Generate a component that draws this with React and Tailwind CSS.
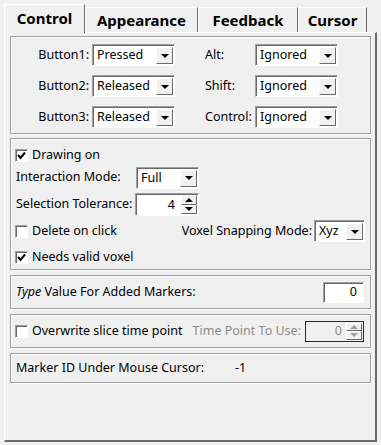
import React from "react";

function Arrow() {
  return <div className="w-0 h-0 border-l-[4px] border-r-[4px] border-t-[4px] border-l-transparent border-r-transparent border-t-black" />;
}

function Choice({ w, value }) {
  return (
    <div className={`flex items-stretch h-[22px] ${w} bg-white border border-t-[#a0a0a0] border-l-[#a0a0a0] border-r-white border-b-white shadow-[inset_1px_1px_0_#696969]`}>
      <span className="flex-1 flex items-center pl-[4px] pt-[1px] overflow-hidden">{value}</span>
      <div className="w-[17px] mt-[2px] mb-[1px] mr-[1px] bg-[#f0f0f0] border border-t-white border-l-white border-r-[#696969] border-b-[#696969] flex items-center justify-center">
        <Arrow />
      </div>
    </div>
  );
}

function SpinBtns({ disabled }) {
  const c = disabled ? "border-b-[#a0a0a0]" : "border-b-black";
  const d = disabled ? "border-t-[#a0a0a0]" : "border-t-black";
  return (
    <div className="w-[16px] flex flex-col mt-[1px] mb-[1px] mr-[1px]">
      <div className="flex-1 bg-[#f0f0f0] border border-t-white border-l-white border-r-[#696969] border-b-[#696969] flex items-center justify-center">
        <div className={`w-0 h-0 border-l-[4px] border-r-[4px] border-b-[4px] border-l-transparent border-r-transparent ${c}`} />
      </div>
      <div className="flex-1 bg-[#f0f0f0] border border-t-white border-l-white border-r-[#696969] border-b-[#696969] flex items-center justify-center">
        <div className={`w-0 h-0 border-l-[4px] border-r-[4px] border-t-[4px] border-l-transparent border-r-transparent ${d}`} />
      </div>
    </div>
  );
}

function Check({ on }) {
  return (
    <div className="w-[13px] h-[13px] shrink-0 bg-white border border-t-[#a0a0a0] border-l-[#a0a0a0] border-r-white border-b-white shadow-[inset_1px_1px_0_#696969] flex items-center justify-center">
      {on && (
        <svg width="11" height="11" viewBox="0 0 11 11">
          <path d="M2 5 L4.5 8 L9 2.5" fill="none" stroke="black" strokeWidth="2" />
        </svg>
      )}
    </div>
  );
}

function Group({ h, mt, children }) {
  return (
    <div className={`w-[361px] ${h} ${mt} border border-[#a0a0a0] shadow-[inset_1px_1px_0_white,1px_1px_0_white]`}>
      {children}
    </div>
  );
}

export default function App() {
  return (
    <div className="w-[381px] h-[445px] bg-[#f0f0f0] overflow-hidden text-[12.5px] text-black font-['Noto_Sans',sans-serif] leading-none whitespace-nowrap">
      {/* tabs */}
      <div className="flex items-end h-[32px] pl-[4px] font-bold text-[15px]">
        <div className="relative z-10 mb-[-1px] w-[81px] h-[29px] bg-[#f0f0f0] border-l border-t border-white border-r border-r-[#696969] flex items-center justify-center pb-[1px]">
          Control
        </div>
        <div className="w-[113px] h-[25px] border-l border-t border-white border-r border-r-[#696969] flex items-center justify-center pt-[1px]">
          Appearance
        </div>
        <div className="w-[100px] h-[25px] border-l border-t border-white border-r border-r-[#696969] flex items-center justify-center pt-[1px]">
          Feedback
        </div>
        <div className="w-[69px] h-[25px] border-l border-t border-white border-r border-r-[#696969] flex items-center justify-center pt-[1px]">
          Cursor
        </div>
      </div>

      {/* panel */}
      <div className="ml-[4px] w-[373px] h-[410px] border-l border-t border-white border-r-2 border-b-2 border-r-[#696969] border-b-[#696969] pt-[3px] pl-[5px]">
        <Group h="h-[98px]" mt="mt-0">
          <div className="flex flex-col gap-[9px] pt-[7px]">
            {[
              ["Button1:", "Pressed", "Alt:"],
              ["Button2:", "Released", "Shift:"],
              ["Button3:", "Released", "Control:"],
            ].map(([l, v, r]) => (
              <div key={l} className="flex items-center">
                <span className="w-[78px] text-right">{l}</span>
                <div className="ml-[3px]"><Choice w="w-[83px]" value={v} /></div>
                <span className="ml-[30px] w-[50px]">{r}</span>
                <Choice w="w-[83px]" value="Ignored" />
              </div>
            ))}
          </div>
        </Group>

        <Group h="h-[132px]" mt="mt-[4px]">
          <div className="flex flex-col pt-[5px]">
            <div className="h-[22px] flex items-center pl-[4px] gap-[4px]">
              <Check on />
              <span>Drawing on</span>
            </div>
            <div className="h-[23px] flex items-center pl-[5px]">
              <span className="w-[120px]">Interaction Mode:</span>
              <Choice w="w-[63px]" value="Full" />
            </div>
            <div className="h-[23px] mt-[4px] flex items-center pl-[5px]">
              <span className="w-[119px]">Selection Tolerance:</span>
              <div className="flex items-stretch h-[23px] w-[64px] bg-white border border-t-[#a0a0a0] border-l-[#a0a0a0] border-r-white border-b-white shadow-[inset_1px_1px_0_#696969]">
                <span className="flex-1 flex items-center justify-end pr-[6px] pt-[1px]">4</span>
                <SpinBtns />
              </div>
            </div>
            <div className="h-[24px] mt-[3px] flex items-center pl-[4px] pr-[5px]">
              <Check />
              <span className="ml-[4px]">Delete on click</span>
              <span className="flex-1" />
              <span className="mr-[2px]">Voxel Snapping Mode:</span>
              <Choice w="w-[51px]" value="Xyz" />
            </div>
            <div className="h-[24px] mt-[2px] flex items-center pl-[4px] gap-[4px]">
              <Check on />
              <span>Needs valid voxel</span>
            </div>
          </div>
        </Group>

        <Group h="h-[34px]" mt="mt-[5px]">
          <div className="h-full flex items-center pl-[5px] pr-[6px]">
            <span><i>Type</i> Value For Added Markers:</span>
            <span className="flex-1" />
            <div className="flex items-center justify-end pr-[6px] pt-[1px] h-[21px] w-[41px] bg-white border border-t-[#a0a0a0] border-l-[#a0a0a0] border-r-white border-b-white shadow-[inset_1px_1px_0_#696969]">
              0
            </div>
          </div>
        </Group>

        <Group h="h-[34px]" mt="mt-[5px]">
          <div className="h-full flex items-center pl-[4px] pr-[6px]">
            <Check />
            <span className="ml-[4px]">Overwrite slice time point</span>
            <span className="flex-1" />
            <span className="text-[#8c8c8c] mr-[4px]">Time Point To Use:</span>
            <div className="flex items-stretch h-[21px] w-[59px] bg-[#f0f0f0] border border-[#2a2a2a]">
              <span className="flex-1 flex items-center justify-end pr-[4px] pt-[1px] text-[#8c8c8c]">0</span>
              <SpinBtns disabled />
            </div>
          </div>
        </Group>

        <Group h="h-[30px]" mt="mt-[5px]">
          <div className="h-full flex items-center pl-[5px]">
            <span className="w-[219px]">Marker ID Under Mouse Cursor:</span>
            <span>-1</span>
          </div>
        </Group>
      </div>
    </div>
  );
}
